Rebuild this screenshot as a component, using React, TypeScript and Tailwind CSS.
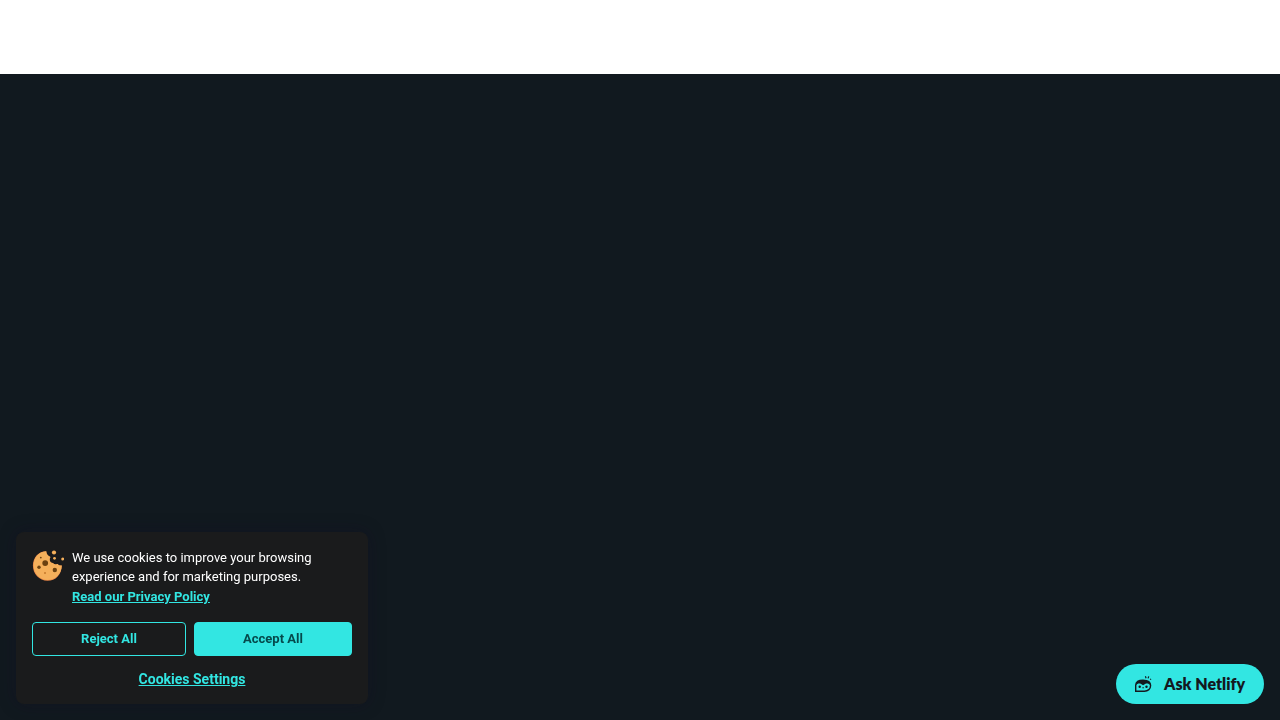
import React, { useState } from 'react';

function CookieIcon() {
    return (
        <svg width="32" height="32" viewBox="0 0 32 32" aria-hidden="true" className="mt-0.5 shrink-0">
            <path
                d="M14.2 1.2C6.6 1.2.9 7.4.9 15.6.9 24 7.200 30.800 15.500 30.800c8.200 0 14.200-6.300 14.300-15.400-1.900.2-3.300-.3-4.100-1.500-1.700.9-3.900.5-4.900-.9-1.900-.3-3.200-1.700-3.200-3.600 0-1 .4-1.900.9-2.500-2.700-.9-4.100-3-4.300-5.700Z"
                fill="#e98648"
            />
            <path
                d="M14.200 1.200C7 1.600 1.600 7.500 1.600 15.400c0 8 6 14.500 13.900 14.500 8 0 13.900-5.900 14.300-14.500-1.900.2-3.300-.3-4.100-1.500-1.700.9-3.900.5-4.900-.9-1.900-.3-3.200-1.700-3.200-3.600 0-1 .4-1.900.9-2.500-2.700-.9-4.100-3-4.300-5.700Z"
                fill="#f5b05b"
            />
            <g fill="#f5b05b">
                <circle cx="22" cy="2.500" r="2.100" />
                <circle cx="22.500" cy="8.300" r="1.400" />
                <circle cx="30.700" cy="8.900" r="1.500" />
            </g>
            <g fill="#6b4110">
                <circle cx="13.200" cy="13.100" r="2.900" />
                <circle cx="7" cy="17.300" r="1.700" />
                <circle cx="22.800" cy="20" r="2.200" />
                <circle cx="8.800" cy="7.600" r="0.900" />
            </g>
            <circle cx="13" cy="22.900" r="1" fill="#c47a2c" />
        </svg>
    );
}

function BotIcon() {
    return (
        <svg width="18" height="18" viewBox="0 0 18 18" fill="none" aria-hidden="true">
            <path
                d="M1.700 16.200V10.300C1.700 6.800 4.500 5.100 9 5.100s7.600 2 7.600 5.400-2.600 5.700-6.200 5.700H1.700Z"
                stroke="#14191f"
                strokeWidth="1.400"
            />
            <path
                d="M1.700 10.500C2.200 6.600 4.800 4.900 9 4.900s7 1.700 7.500 5.600c-1.500-1.900-3.300-2.300-5-1.700L9.100 10.200 6.700 8.800c-1.700-.6-3.500-.2-5 1.700Z"
                fill="#14191f"
            />
            <g fill="#14191f">
                <circle cx="5.700" cy="11.700" r="1.200" />
                <circle cx="12.500" cy="11.700" r="1.200" />
                <circle cx="9.100" cy="12.700" r="0.700" />
            </g>
            <path
                d="M11.400 1.300l.7 1.900M14.700 1.300l-.6 2M17 3.900l-.8.8"
                stroke="#14191f"
                strokeWidth="1.200"
            />
        </svg>
    );
}

export default function App() {
    const [showBanner, setShowBanner] = useState(true);

    return (
        <div className="min-h-screen flex flex-col bg-white font-['Roboto','Liberation_Sans',sans-serif]">
            <header className="h-[74px]" />
            <main className="flex-1 bg-[#11191f]" />

            {/* Cookie banner */}
            {showBanner && (
                <section
                    aria-label="Cookies"
                    className="fixed bottom-4 left-4 w-[352px] p-4 rounded-lg bg-[#1a1b1c] shadow-[0_0_18px_rgba(20,10,40,0.3)]"
                >
                    <div className="flex gap-2">
                        <CookieIcon />
                        <div className="flex-1 text-[13px] leading-[19px] text-white">
                            <p>We use cookies to improve your browsing experience and for marketing purposes.</p>
                            <a href="#privacy" className="block w-fit mt-px font-bold text-[#32e6e2] underline">
                                Read our Privacy Policy
                            </a>
                        </div>
                    </div>
                    <div className="mt-4 flex gap-2 text-[13px] font-bold">
                        <button
                            onClick={() => setShowBanner(false)}
                            className="h-[34px] grow px-12 border border-[#32e6e2] rounded text-[#32e6e2] whitespace-nowrap"
                        >
                            Reject All
                        </button>
                        <button
                            onClick={() => setShowBanner(false)}
                            className="h-[34px] grow px-12 border border-[#32e6e2] rounded bg-[#32e6e2] text-[#054a4c] whitespace-nowrap"
                        >
                            Accept All
                        </button>
                    </div>
                    <button className="block mx-auto mt-3.5 text-sm leading-[18px] font-bold text-[#32e6e2] underline">
                        Cookies Settings
                    </button>
                </section>
            )}

            <button className="fixed bottom-4 right-4 h-10 pl-[18px] pr-[19px] flex items-center gap-3 rounded-full bg-[#32e6e2] text-base font-extrabold text-[#14191f] font-['Lato','Liberation_Sans',sans-serif]">
                <BotIcon />
                Ask Netlify
            </button>
        </div>
    );
}
